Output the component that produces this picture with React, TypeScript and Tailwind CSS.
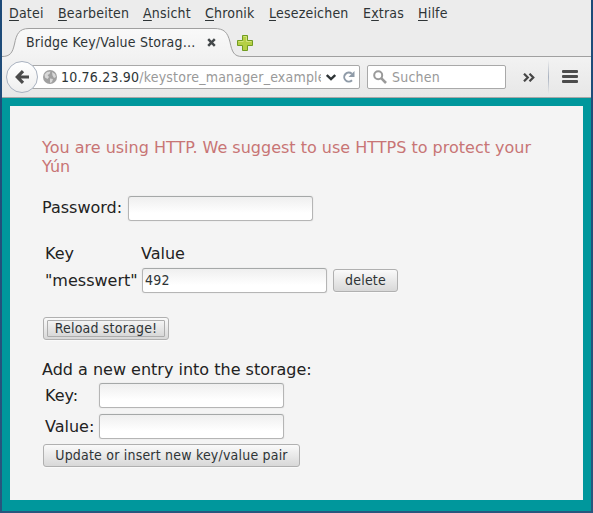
import React from "react";

const MENU: [string, string, string, string][] = [
  ["", "D", "atei", "w-[49px]"],
  ["", "B", "earbeiten", "w-[85px]"],
  ["", "A", "nsicht", "w-[62px]"],
  ["", "C", "hronik", "w-[64px]"],
  ["", "L", "esezeichen", "w-[94px]"],
  ["E", "x", "tras", "w-[55px]"],
  ["", "H", "ilfe", "w-[60px]"],
];

const FIELD =
  "block h-[25px] w-[185px] shrink-0 rounded-[3px] border border-[#b5b5b5] border-t-[#a5a8a8] bg-linear-to-b from-[#efefef] to-white to-70% px-[2px] pb-[2px] text-[14px] tracking-[0.2px] leading-[21px] text-[#2e3436] shadow-[0_0_0_1px_#efefef] outline-none font-['DejaVu_Sans_Condensed','DejaVu_Sans',sans-serif] [font-stretch:condensed]";

const BUTTON =
  "block h-[23px] shrink-0 rounded-[3px] border border-[#b0b0b0] bg-linear-to-b from-[#fafafa] to-[#d8d8d8] text-center text-[14px] tracking-[0.2px] leading-[21px] whitespace-nowrap text-[#2e3436] shadow-[0_1px_0_#fafafa] font-['DejaVu_Sans_Condensed','DejaVu_Sans',sans-serif] [font-stretch:condensed]";

function MenuBar() {
  return (
    <nav className="flex h-[28px] pl-[7px] leading-[27px] text-[#2e3436]">
      {MENU.map(([a, b, c, w]) => (
        <span key={b + c} className={`${w} shrink-0 whitespace-nowrap`}>
          {a}
          <span className="underline decoration-1 underline-offset-2">{b}</span>
          {c}
        </span>
      ))}
    </nav>
  );
}

function TabStrip() {
  return (
    <div className="relative h-[29px]">
      <svg className="absolute inset-0" width="589" height="29" viewBox="0 0 589 29" fill="none">
        <defs>
          <linearGradient id="tab" x1="0" y1="0" x2="0" y2="1">
            <stop offset="0" stopColor="#f9f9f9" />
            <stop offset="1" stopColor="#f2f2f2" />
          </linearGradient>
        </defs>
        <path
          d="M0 28.5C8 28.5 10.500 25 12.500 16C14.500 6 17 .5 27 .5H212C222 .5 225.500 4 228 14C230 24 232 28.500 240 28.500V29H0Z"
          fill="url(#tab)"
        />
        <path
          d="M0 28.5C8 28.5 10.500 25 12.500 16C14.500 6 17 .5 27 .5H212C222 .5 225.500 4 228 14C230 24 232 28.500 240 28.500H589"
          stroke="#a0a0a0"
        />
      </svg>
      <div className="relative flex h-[29px] items-center pl-[24px]">
        <span className="w-[181px] whitespace-nowrap text-[#2e3436]">
          Bridge Key/Value Storag…
        </span>
        <svg width="9" height="9" viewBox="0 0 9 9" stroke="#44484a" strokeWidth="2.5">
          <path d="M1.200 1.200L7.800 7.800M7.800 1.200L1.200 7.800" />
        </svg>
        <svg className="ml-[21px]" width="16" height="16" viewBox="0 0 16 16">
          <path
            d="M5.500.5h5v5h5v5h-5v5h-5v-5h-5v-5h5z"
            fill="#b5cf45"
            stroke="#719c22"
          />
          <path d="M6.500 1.500h3v5h5M1.500 6.500h5" stroke="#d3e37c" fill="none" />
        </svg>
      </div>
    </div>
  );
}

function Toolbar() {
  return (
    <div className="flex h-[41px] items-center border-b border-[#a7a7a7] bg-linear-to-b from-[#f2f2f2] to-[#e7e7e7] pl-[4px]">
      <div className="z-10 flex size-[32px] shrink-0 items-center justify-center rounded-full border border-[#a9b2c0] bg-linear-to-b from-white to-[#eeeeee]">
        <svg width="14" height="14" viewBox="0 0 14 14" fill="none" stroke="#4b4b4b" strokeWidth="3.200">
          <path d="M8 1.200L2.300 7L8 12.800M3 7H14" />
        </svg>
      </div>
      <div className="-ml-[7px] flex h-[24px] w-[329px] shrink-0 items-center rounded-[2px] border border-[#a9a9a9] bg-white pl-[11px]">
        <svg width="14" height="14" viewBox="0 0 14 14" className="shrink-0">
          <circle cx="7" cy="7" r="7" fill="#a0a0a0" />
          <path
            d="M1.500 4.500L4 2L7.500 1.500L6.500 4L4.500 5L6 7L4.500 9L2 7.500ZM9 2L12 4L13 7L11 8L9.500 5.500ZM7 8.500L10 9L9 12L7 13Z"
            fill="#d8d8d8"
          />
        </svg>
        <span className="ml-[4px] w-[260px] shrink-0 overflow-hidden leading-[22px] whitespace-nowrap text-[#999999]">
          <span className="text-[#2e3436]">10.76.23.90</span>/keystore_manager_example
        </span>
        <svg className="ml-[5px] shrink-0" width="10" height="7" viewBox="0 0 10 7" fill="none" stroke="#2e3436" strokeWidth="2.400">
          <path d="M.8 1L5 5L9.200 1" />
        </svg>
        <svg className="ml-[7px] shrink-0" width="12" height="12" viewBox="0 0 12 12">
          <path d="M9 9.200A4.500 4.500 0 1 1 8.800 2.800" fill="none" stroke="#8f9ba8" strokeWidth="2" />
          <path d="M11.500 0V6H5.500Z" fill="#8f9ba8" />
        </svg>
      </div>
      <div className="ml-[7px] flex h-[24px] w-[139px] shrink-0 items-center rounded-[2px] border border-[#a9a9a9] bg-white pl-[5px]">
        <svg width="14" height="14" viewBox="0 0 14 14" fill="none" stroke="#9a9a9a">
          <circle cx="5.200" cy="5.200" r="4" strokeWidth="2" />
          <path d="M8.200 8.200L13 13" strokeWidth="2.600" />
        </svg>
        <span className="ml-[5px] leading-[22px] text-[#999999]">Suchen</span>
      </div>
      <svg className="ml-[17px] shrink-0" width="12" height="9" viewBox="0 0 12 9" fill="none" stroke="#474747" strokeWidth="2.200">
        <path d="M1 .7L4.800 4.500L1 8.300M6.500 .7L10.300 4.500L6.500 8.300" />
      </svg>
      <div className="ml-[13px] h-[34px] w-px bg-linear-to-b from-transparent via-[#a9b2c0] to-transparent" />
      <div className="ml-[13px] flex flex-col gap-[2px] pb-px">
        <div className="h-[3px] w-[16px] rounded-[1px] bg-[#4b4b4b]" />
        <div className="h-[3px] w-[16px] rounded-[1px] bg-[#4b4b4b]" />
        <div className="h-[3px] w-[16px] rounded-[1px] bg-[#4b4b4b]" />
      </div>
    </div>
  );
}

export default function App() {
  return (
    <div className="h-[513px] w-[593px] overflow-hidden bg-linear-to-b from-[#1d4a78] to-[#28567e] px-[2px] pb-[2px]">
      <div className="flex h-[511px] w-[589px] flex-col bg-[#ececec]">
        <header className="text-[14px] tracking-[0.2px] font-['DejaVu_Sans_Condensed','DejaVu_Sans',sans-serif] [font-stretch:condensed]">
          <MenuBar />
          <TabStrip />
          <Toolbar />
        </header>
        <main className="h-[413px] bg-[#00979c] px-[8px] pt-[8px] pb-[11px]">
          <div className="h-[394px] bg-[#f4f4f4] pt-[32px] pl-[32px] font-['DejaVu_Sans',sans-serif] text-[16px] leading-[19px] text-[#222222]">
            <p className="w-[509px] text-[#c87575]">
              You are using HTTP. We suggest to use HTTPS to protect your Yún
            </p>
            <div className="mt-[20px] flex">
              <label className="w-[86px] pt-[2px]">Password:</label>
              <input type="password" className={FIELD} />
            </div>
            <div className="mt-[23px] flex pl-[3px]">
              <span className="w-[96px]">Key</span>
              <span>Value</span>
            </div>
            <div className="mt-[5px] flex pl-[3px]">
              <span className="w-[97px] pt-[3px]">"messwert"</span>
              <input type="text" defaultValue="492" className={FIELD} />
              <button className={`${BUTTON} mt-px ml-[6px] w-[65px]`}>delete</button>
            </div>
            <button className={`${BUTTON} mt-[24px] ml-px w-[126px] px-[3px]`}>
              <span className="block h-[17px] rounded-[1px] border border-[#adadad] bg-linear-to-b from-[#f4f4f4] to-[#d8d8d8] leading-[15px]">
                Reload storage!
              </span>
            </button>
            <p className="mt-[20px]">Add a new entry into the storage:</p>
            <div className="mt-[4px] flex pl-[3px]">
              <label className="w-[54px] pt-[3px]">Key:</label>
              <input type="text" className={FIELD} />
            </div>
            <div className="mt-[6px] flex pl-[3px]">
              <label className="w-[54px] pt-[3px]">Value:</label>
              <input type="text" className={FIELD} />
            </div>
            <button className={`${BUTTON} mt-[5px] ml-px w-[257px]`}>
              Update or insert new key/value pair
            </button>
          </div>
        </main>
      </div>
    </div>
  );
}
